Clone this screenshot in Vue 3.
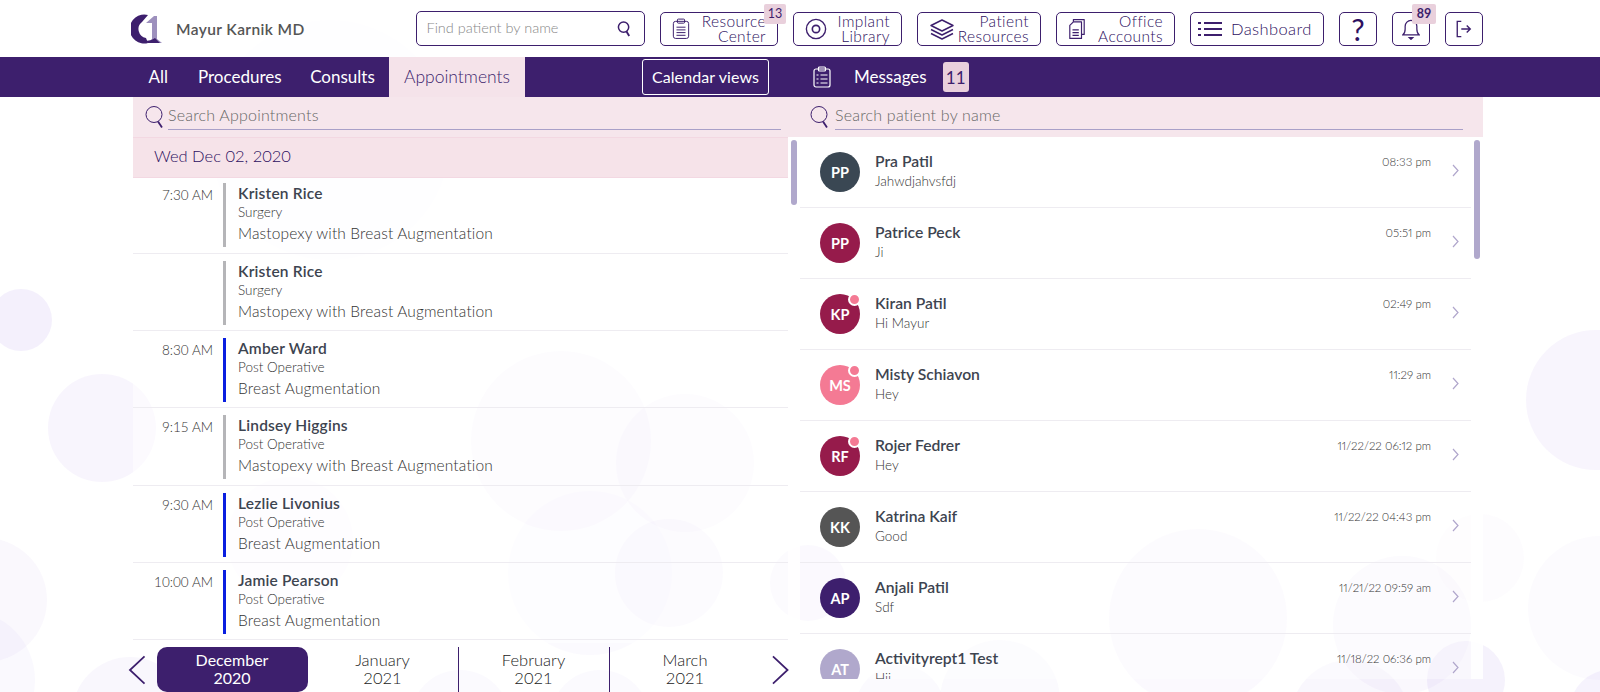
<script setup>
const tools = [
  { id: 'res', l1: 'Resource', l2: 'Center', w: 118, badge: '13' },
  { id: 'imp', l1: 'Implant', l2: 'Library', w: 109 },
  { id: 'pat', l1: 'Patient', l2: 'Resources', w: 124 },
  { id: 'off', l1: 'Office', l2: 'Accounts', w: 119 }
]
const appts = [
  { t: '7:30 AM', n: 'Kristen Rice', s: 'Surgery', p: 'Mastopexy with Breast Augmentation', c: 'gray' },
  { t: '', n: 'Kristen Rice', s: 'Surgery', p: 'Mastopexy with Breast Augmentation', c: 'gray' },
  { t: '8:30 AM', n: 'Amber Ward', s: 'Post Operative', p: 'Breast Augmentation', c: 'blue' },
  { t: '9:15 AM', n: 'Lindsey Higgins', s: 'Post Operative', p: 'Mastopexy with Breast Augmentation', c: 'gray' },
  { t: '9:30 AM', n: 'Lezlie Livonius', s: 'Post Operative', p: 'Breast Augmentation', c: 'blue' },
  { t: '10:00 AM', n: 'Jamie Pearson', s: 'Post Operative', p: 'Breast Augmentation', c: 'blue' }
]
const msgs = [
  { i: 'PP', n: 'Pra Patil', m: 'Jahwdjahvsfdj', t: '08:33 pm', c: '#3a4753' },
  { i: 'PP', n: 'Patrice Peck', m: 'Ji', t: '05:51 pm', c: '#961b4b' },
  { i: 'KP', n: 'Kiran Patil', m: 'Hi Mayur', t: '02:49 pm', c: '#961b4b', dot: true },
  { i: 'MS', n: 'Misty Schiavon', m: 'Hey', t: '11:29 am', c: '#f47a94', dot: true },
  { i: 'RF', n: 'Rojer Fedrer', m: 'Hey', t: '11/22/22 06:12 pm', c: '#961b4b', dot: true },
  { i: 'KK', n: 'Katrina Kaif', m: 'Good', t: '11/22/22 04:43 pm', c: '#555555' },
  { i: 'AP', n: 'Anjali Patil', m: 'Sdf', t: '11/21/22 09:59 am', c: '#3d1f6d' },
  { i: 'AT', n: 'Activityrept1 Test', m: 'Hii', t: '11/18/22 06:36 pm', c: '#b0a8cc' }
]
const months = [
  { m: 'December', y: '2020', on: true },
  { m: 'January', y: '2021' },
  { m: 'February', y: '2021' },
  { m: 'March', y: '2021' }
]
const bubbles = [
  [21, 320, 31, .09], [102, 428, 54, .06], [-15, 600, 62, .045], [-35, 680, 70, .04], [130, 715, 58, .05],
  [1596, 400, 70, .06], [1600, 608, 72, .025], [1610, 710, 40, .07], [1466, 680, 39, .08], [1402, 625, 69, .045],
  [1350, 720, 60, .05], [1480, 558, 44, .02], [561, 441, 90, .045], [685, 463, 69, .045], [669, 573, 54, .05],
  [590, 573, 82, .03], [808, 583, 38, .055], [290, 540, 63, .025], [460, 720, 50, .03], [1198, 618, 89, .035],
  [330, 140, 120, .018], [1000, 700, 60, .03], [900, 710, 45, .03], [600, 720, 50, .03]
]
function bubbleStyle(b) {
  return {
    left: b[0] - b[2] + 'px',
    top: b[1] - b[2] + 'px',
    width: b[2] * 2 + 'px',
    height: b[2] * 2 + 'px',
    background: `rgba(130, 90, 220, ${b[3]})`
  }
}
</script>

<template>
  <div class="page">
    <div class="bubbles" aria-hidden="true">
      <span v-for="(b, i) in bubbles" :key="i" class="bubble" :style="bubbleStyle(b)"></span>
    </div>

    <header class="top">
      <div class="brand">
        <svg class="logo" viewBox="0 0 32 30" width="32" height="30">
          <path d="M17 1 A14.5 14.5 0 1 0 17 29 L15 24 A9 9 0 0 1 11 8 Z" fill="#3d1f6d" />
          <path d="M15 9 L23 2 H26 V25 L31 29 H18 L21 25 V9 Z" fill="#9d90bd" />
          <path d="M13 27 Q20 27 24 24 L29 29 H17 Z" fill="#3d1f6d" />
        </svg>
        <span class="doc">Mayur Karnik MD</span>
      </div>
      <div class="find">
        <span class="ph">Find patient by name</span>
        <svg viewBox="0 0 16 18" width="15" height="17" fill="none" stroke="#3d1f6d" stroke-width="1.6">
          <circle cx="7" cy="7.5" r="5.5" /><path d="M10 12l3 5" stroke-width="2" />
        </svg>
      </div>
      <div v-for="t in tools" :key="t.id" class="tool" :style="{ width: t.w + 'px' }">
        <svg v-if="t.id === 'res'" viewBox="0 0 20 24" width="18" height="22" fill="none" stroke="#3d1f6d" stroke-width="1.1">
          <rect x="1.5" y="3.5" width="17" height="19" rx="2.5" /><rect x="6" y="1" width="8" height="4.5" rx="1" />
          <path d="M5 10h10M5 13h10M5 16h10M5 19h10" />
        </svg>
        <svg v-if="t.id === 'imp'" viewBox="0 0 24 24" width="22" height="22" fill="none" stroke="#3d1f6d" stroke-width="1.5">
          <circle cx="12" cy="12" r="10.5" /><circle cx="12" cy="12" r="4" stroke-width="1.8" />
        </svg>
        <svg v-if="t.id === 'pat'" viewBox="0 0 26 22" width="26" height="22" fill="none" stroke="#3d1f6d" stroke-width="1.5" stroke-linejoin="round">
          <path d="M13 2 24 7.5 13 13 2 7.5Z" /><path d="M2 11.5 13 17l11-5.500" /><path d="M2 15.500 13 21l11-5.500" />
        </svg>
        <svg v-if="t.id === 'off'" viewBox="0 0 20 24" width="18" height="22" fill="none" stroke="#3d1f6d" stroke-width="1.3" stroke-linejoin="round">
          <path d="M6 4V1.500h12V18h-3" /><path d="M6 4h9v18.500H2V8Z" /><path d="M5 13h7M5 16h7M5 19h7" />
        </svg>
        <span class="lbl"><span>{{ t.l1 }}</span><span>{{ t.l2 }}</span></span>
        <b v-if="t.badge" class="badge">{{ t.badge }}</b>
      </div>
      <div class="tool dash">
        <svg viewBox="0 0 24 18" width="24" height="18" fill="#3d1f6d">
          <rect x="0" y="2" width="3" height="2" /><rect x="6" y="2" width="18" height="2" />
          <rect x="0" y="8" width="3" height="2" /><rect x="6" y="8" width="18" height="2" />
          <rect x="0" y="14" width="3" height="2" /><rect x="6" y="14" width="18" height="2" />
        </svg>
        <span>Dashboard</span>
      </div>
      <div class="tool square q">?</div>
      <div class="tool square bell">
        <svg viewBox="0 0 20 24" width="18" height="22" fill="none" stroke="#3d1f6d" stroke-width="1.400">
          <path d="M1 18.500c2-1.500 2.500-3 2.500-6.500V9a6.500 6.500 0 0 1 13 0v3c0 3.500.5 5 2.500 6.500Z" />
          <path d="M8 21.500h4L10 23.500Z" fill="#3d1f6d" />
        </svg>
        <b class="badge bb">89</b>
      </div>
      <div class="tool square">
        <svg viewBox="0 0 20 20" width="18" height="18" fill="none" stroke="#3d1f6d" stroke-width="1.500">
          <path d="M7 1.500H2.500v17H7" /><path d="M7 10h10M13 6l4 4-4 4" />
        </svg>
      </div>
    </header>

    <nav class="nav">
      <div class="nav-left">
        <div class="tabs">
          <a class="tab">All</a>
          <a class="tab">Procedures</a>
          <a class="tab">Consults</a>
          <a class="tab active">Appointments</a>
        </div>
        <a class="cal">Calendar views</a>
      </div>
      <div class="nav-right">
        <svg viewBox="0 0 18 22" width="18" height="22" fill="none" stroke="#fff" stroke-width="1.200">
          <rect x="1" y="3" width="16" height="18" rx="2" /><rect x="5.500" y="1" width="7" height="4" rx="1" />
          <path d="M3.500 9h2M3.500 13h2M3.500 17h2M7.500 9h7M7.500 13h7M7.500 17h7" />
        </svg>
        <span class="msg">Messages</span>
        <b class="msgn">11</b>
      </div>
    </nav>

    <main class="main">
      <section class="left">
        <div class="search">
          <svg viewBox="0 0 20 24" width="20" height="24" fill="none" stroke="#3d1f6d" stroke-width="1">
            <circle cx="9" cy="9.500" r="8" /><path d="M13 16.500l4 6" stroke-width="1.800" />
          </svg>
          <span class="sfield">Search Appointments</span>
        </div>
        <div class="date"><span>Wed Dec 02, 2020</span></div>
        <div class="alist">
          <div v-for="(a, i) in appts" :key="i" class="appt">
            <span class="time">{{ a.t }}</span>
            <span class="bar" :class="a.c"></span>
            <div class="info">
              <div class="an">{{ a.n }}</div>
              <div class="as">{{ a.s }}</div>
              <div class="ap">{{ a.p }}</div>
            </div>
          </div>
          <span class="sb sb-left"></span>
        </div>
        <div class="months">
          <svg class="arrow" viewBox="0 0 18 30" width="18" height="30" fill="none" stroke="#3d1f6d" stroke-width="1.800"><path d="M17 1 2 15l15 14" /></svg>
          <div class="mlist">
            <div v-for="m in months" :key="m.m" class="month" :class="{ on: m.on }"><span>{{ m.m }}</span><span>{{ m.y }}</span></div>
          </div>
          <svg class="arrow" viewBox="0 0 18 30" width="18" height="30" fill="none" stroke="#3d1f6d" stroke-width="1.800"><path d="M1 1l15 14L1 29" /></svg>
        </div>
      </section>

      <section class="right">
        <div class="search rsearch">
          <svg viewBox="0 0 20 24" width="20" height="24" fill="none" stroke="#3d1f6d" stroke-width="1">
            <circle cx="9" cy="9.500" r="8" /><path d="M13 16.500l4 6" stroke-width="1.800" />
          </svg>
          <span class="sfield">Search patient by name</span>
        </div>
        <div class="mwrap">
          <div class="mbox">
            <div v-for="(m, i) in msgs" :key="i" class="row">
              <div class="av" :style="{ background: m.c }">{{ m.i }}<i v-if="m.dot" class="dot"></i></div>
              <div class="minfo">
                <div class="mn">{{ m.n }}</div>
                <div class="mm">{{ m.m }}</div>
              </div>
              <div class="mt">{{ m.t }}</div>
              <svg class="chev" viewBox="0 0 7 13" width="7" height="13" fill="none" stroke="#b0a6cc" stroke-width="1.200"><path d="M1 1l5 5.500L1 12" /></svg>
            </div>
          </div>
          <span class="sb sb-right"></span>
        </div>
      </section>
    </main>
  </div>
</template>

<style>
html, body { margin: 0; background: #fff; overflow: hidden; }
</style>

<style scoped>
* { box-sizing: border-box; }
.page {
  position: relative; width: 1600px; height: 692px; overflow: hidden;
  font-family: Lato, "Open Sans", sans-serif; font-weight: 300; color: #3d4450; background: #fff;
}
.bubbles { position: absolute; inset: 0; z-index: 0; }
.bubble { position: absolute; border-radius: 50%; }

.top {
  position: relative; z-index: 1; height: 57px; display: flex; align-items: center;
  padding: 0 117px 0 131px; background: rgba(255, 255, 255, .6);
}
.brand { display: flex; align-items: center; gap: 13px; width: 284.500px; }
.logo { flex: none; }
.doc { font-size: 15.500px; font-weight: 600; color: #555; letter-spacing: .4px; }
.find {
  width: 229.500px; height: 35px; margin-right: 15px; display: flex; align-items: center; justify-content: space-between;
  padding: 0 12px 0 10px; border: 1px solid #3d1f6d; border-radius: 5px; font-size: 14.500px; color: #888; background: #fff;
}
.ph { margin-top: -3px; }
.tool {
  position: relative; height: 34px; margin-right: 15px; flex: none; display: flex; align-items: center; justify-content: space-between;
  padding: 0 11px; border: 1px solid #3d1f6d; border-radius: 5px; background: #fff; color: #2d1060;
}
.lbl { display: flex; flex-direction: column; align-items: flex-end; font-size: 15.500px; line-height: 15px; letter-spacing: .4px; }
.dash { width: 134px; padding: 0 7px; justify-content: flex-start; gap: 9px; font-size: 16.500px; letter-spacing: .4px; }
.square { width: 38px; padding: 0; justify-content: center; }
.square:last-child { margin-right: 0; }
.q { font-size: 30px; font-weight: 400; }
.badge {
  position: absolute; right: -9px; top: -9px; width: 22px; height: 20px; display: flex; align-items: center; justify-content: center;
  background: #e9d0dc; border-radius: 2px; font-size: 12.500px; font-weight: 400; color: #3d1f6d;
}
.bb { right: -7px; width: 24px; font-weight: 700; }

.nav { position: relative; z-index: 1; height: 40px; display: flex; padding-left: 133px; background: #3d1f6d; color: #fff; }
.nav-left { width: 668px; display: flex; align-items: stretch; }
.tabs { display: grid; grid-template-columns: 50.500px 112.500px 93px 136px; }
.tab { font-size: 17px; font-weight: 400; display: flex; align-items: center; justify-content: center; padding-bottom: 2px; }
.tab.active { background: #f5e3ea; color: #3d1f6d; font-weight: 300; font-size: 17.500px; }
.cal {
  align-self: center; margin-left: 117px; width: 127px; height: 36px; display: flex; align-items: center; justify-content: center;
  border: 1px solid #fff; border-radius: 3px; font-size: 16px; font-weight: 400; letter-spacing: .1px; padding-bottom: 2px;
}
.nav-right { display: flex; align-items: center; padding-left: 12px; }
.msg { margin-left: 23px; font-size: 17px; font-weight: 400; padding-bottom: 2px; }
.msgn {
  margin-left: 16px; width: 26px; height: 30px; display: flex; align-items: center; justify-content: center;
  background: #e9d0dc; color: #3d1f6d; border-radius: 3px; font-size: 17px; font-weight: 400;
}

.main { position: relative; z-index: 1; height: 595px; display: flex; padding-left: 133px; }
.left { position: relative; z-index: 2; width: 655px; display: flex; flex-direction: column; }
.right { width: 695px; height: 582px; display: flex; flex-direction: column; }
.search { height: 40px; flex: none; display: flex; align-items: center; padding: 0 7px 0 12px; background: #f6e6ec; gap: 3px; }
.rsearch { padding: 0 20px 0 22px; gap: 5px; }
.sfield {
  flex: 1; align-self: flex-start; margin-top: 3px; height: 30px; line-height: 30px; border-bottom: 1px solid #a9a0c8;
  font-size: 16px; color: #666; letter-spacing: .2px;
}
.date {
  height: 41px; flex: none; padding: 0 0 3px 21px; display: flex; align-items: center; background: #f6e3e9;
  border-top: 1px solid #f3d8e2; border-bottom: 1px solid #f3d8e2; font-size: 16.500px; color: #2d1060;
}
.alist { position: relative; height: 465px; background: rgba(255, 255, 255, .5); }
.appt { height: 77.400px; display: flex; border-bottom: 1px solid #eeecf1; padding-top: 7px; }
.appt:first-child { height: 75.500px; padding-top: 5px; }
.time { width: 80px; padding-top: 3px; text-align: right; font-size: 13.500px; line-height: 18px; color: #333; flex: none; }
.bar { width: 3px; height: 64px; margin-left: 10px; flex: none; }
.gray { background: #b5b5b8; }
.blue { background: #0a1fe0; }
.info { margin-left: 12px; }
.an { font-size: 15.500px; font-weight: 600; line-height: 20px; color: #3d4450; letter-spacing: .2px; }
.as { font-size: 13.500px; line-height: 19px; color: #333; }
.ap { font-size: 15.500px; line-height: 22px; color: #333; letter-spacing: .14px; }

.months { height: 49px; flex: none; padding: 4px 0 0 0; margin-left: -5px; margin-right: -1px; display: flex; align-items: center; gap: 11px; }
.mlist { display: flex; flex: 1; height: 45px; }
.month {
  width: 151px; display: flex; flex-direction: column; align-items: center; justify-content: center; padding-bottom: 1px;
  font-size: 16.500px; line-height: 18px; color: #222; border-right: 1px solid #3d1f6d;
}
.month:last-child { border-right: 0; }
.month.on { background: #3d1f6d; color: #fff; border-radius: 10px; border: 0; font-weight: 400; font-size: 16px; }

.mwrap {
  position: relative; flex: 1; min-height: 0;
  border-left: 12px solid rgba(255, 255, 255, .9); border-right: 12px solid rgba(255, 255, 255, .9);
}
.mbox { height: 100%; overflow: hidden; background: rgba(255, 255, 255, .4); }
.row { position: relative; height: 71px; display: flex; border-bottom: 1px solid #eeecf1; padding: 15px 12px 0 20px; }
.av {
  position: relative; width: 40px; height: 40px; flex: none; border-radius: 50%; display: flex; align-items: center; justify-content: center;
  color: #fff; font-size: 14.500px; font-weight: 700;
}
.dot { position: absolute; right: -1px; top: -1px; width: 13px; height: 13px; border-radius: 50%; background: #f47a94; border: 2px solid #fff; }
.minfo { margin: -1px 0 0 15px; flex: 1; }
.mn { font-size: 15.700px; font-weight: 600; line-height: 20px; color: #3d4450; }
.mm { font-size: 13.500px; line-height: 20px; color: #333; }
.mt { font-size: 11.500px; line-height: 20px; color: #333; font-feature-settings: "pnum"; }
.chev { margin: 12px 0 0 21px; flex: none; }
.sb { position: absolute; z-index: 3; width: 6px; border-radius: 3px; background: #b0a8cc; }
.sb-left { right: -9px; top: -38px; height: 65px; }
.sb-right { right: -9px; top: 3px; height: 119px; }
</style>
